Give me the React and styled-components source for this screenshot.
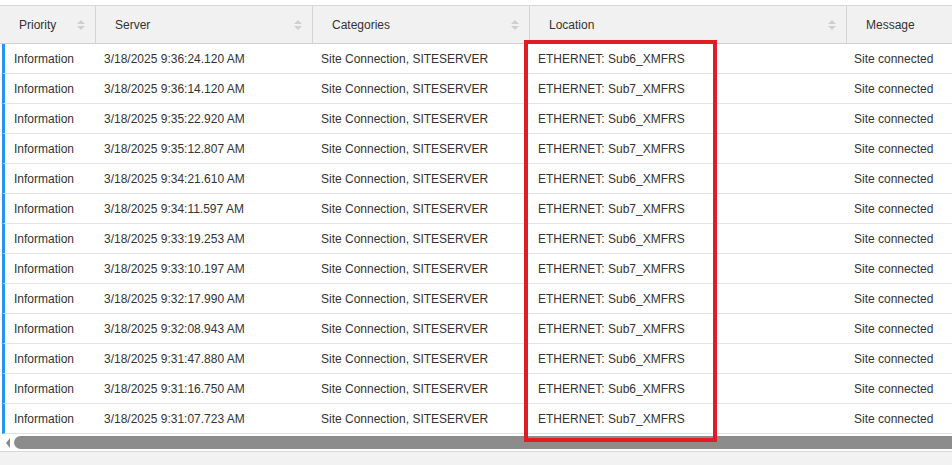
import styled, { createGlobalStyle } from "styled-components";

const Global = createGlobalStyle`
  body { margin: 0; background: #fff; font-family: "Liberation Sans", Arial, sans-serif; }
`;

const cols = "96px 217px 217px 317px 1fr";
const rowCols = "91px 217px 217px 317px 1fr";

const Wrap = styled.div`
  position: relative;
  width: 952px;
  height: 465px;
  padding-top: 5px;
  box-sizing: border-box;
  overflow: hidden;
`;
const Header = styled.div`
  display: grid;
  grid-template-columns: ${cols};
  height: 37px;
  background: #f1f1f1;
  border-top: 1px solid #d6d6d6;
  border-bottom: 1px solid #cfcfcf;
`;
const HeadCell = styled.div`
  display: flex;
  align-items: center;
  justify-content: space-between;
  padding: 0 10px 0 19px;
  font-size: 12px;
  color: #333;
  border-right: 1px solid #d4d4d4;
  &:last-child { border-right: none; }
`;
const Sort = styled.span`
  display: flex;
  flex-direction: column;
  gap: 2px;
  &::before, &::after {
    content: "";
    border-left: 4px solid transparent;
    border-right: 4px solid transparent;
  }
  &::before { border-bottom: 4px solid #cfcfcf; }
  &::after { border-top: 4px solid #cfcfcf; }
`;
const Row = styled.div`
  display: grid;
  grid-template-columns: ${rowCols};
  height: 29px;
  border-bottom: 1px solid #e3e3e3;
  border-left: 3px solid #2196f3;
  margin-left: 2px;
`;
const Cell = styled.div`
  display: flex;
  align-items: center;
  padding-left: ${(p) => p.$pl || 8}px;
  font-size: 12px;
  color: #333;
  white-space: nowrap;
`;
const ScrollBar = styled.div`
  display: flex;
  align-items: center;
  height: 17px;
  gap: 4px;
  padding-left: 6px;
  border-bottom: 1px solid #d8d8d8;
`;
const Arrow = styled.span`
  border-top: 5px solid transparent;
  border-bottom: 5px solid transparent;
  border-right: 4px solid #8a8a8a;
`;
const Thumb = styled.div`
  flex: 1;
  height: 13px;
  background: #8c8c8c;
  border-radius: 7px 0 0 7px;
`;
const Footer = styled.div`
  height: 14px;
  background: #f2f2f2;
`;
const Highlight = styled.div`
  position: absolute;
  left: 524px;
  top: 40px;
  width: 185px;
  height: 394px;
  border: 4px solid #e31b23;
`;

const times = [
  "9:36:24.120", "9:36:14.120", "9:35:22.920", "9:35:12.807", "9:34:21.610",
  "9:34:11.597", "9:33:19.253", "9:33:10.197", "9:32:17.990", "9:32:08.943",
  "9:31:47.880", "9:31:16.750", "9:31:07.723",
];
const subs = [6, 7, 6, 7, 6, 7, 6, 7, 6, 7, 6, 6, 7];

export default function App() {
  return (
    <Wrap>
      <Global />
      <Header>
        <HeadCell>Priority<Sort /></HeadCell>
        <HeadCell>Server<Sort /></HeadCell>
        <HeadCell>Categories<Sort /></HeadCell>
        <HeadCell>Location<Sort /></HeadCell>
        <HeadCell>Message</HeadCell>
      </Header>
      {times.map((t, i) => (
        <Row key={t}>
          <Cell $pl={9}>Information</Cell>
          <Cell>3/18/2025 {t} AM</Cell>
          <Cell>Site Connection, SITESERVER</Cell>
          <Cell>ETHERNET: Sub{subs[i]}_XMFRS</Cell>
          <Cell $pl={7}>Site connected</Cell>
        </Row>
      ))}
      <ScrollBar>
        <Arrow />
        <Thumb />
      </ScrollBar>
      <Footer />
      <Highlight />
    </Wrap>
  );
}
